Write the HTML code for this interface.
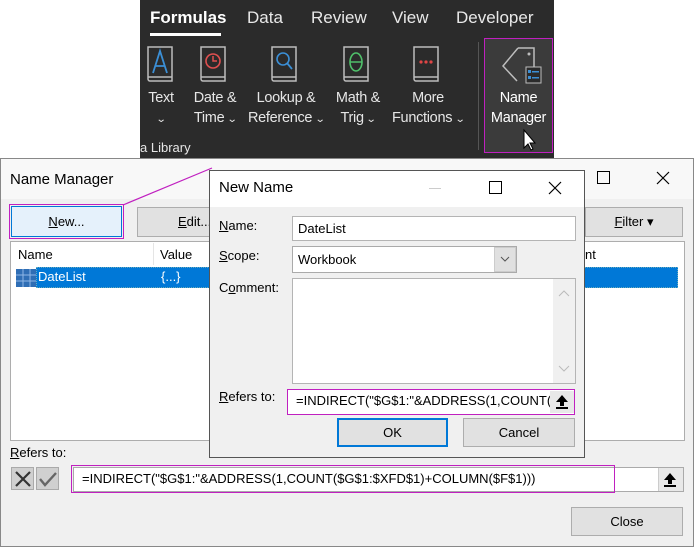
<!DOCTYPE html>
<html><head><meta charset="utf-8"><style>
*{box-sizing:border-box;margin:0;padding:0}
body{width:694px;height:547px;position:relative;background:#fff;font-family:"Segoe UI","Liberation Sans",sans-serif;overflow:hidden;font-size:13px;color:#000}
.a{position:absolute}
.rib{left:140px;top:0;width:414px;height:158px;background:#2b2b2b;color:#e8e8e8}
.rib .t{position:absolute;font-size:17px;top:8px}
.lbl{position:absolute;font-size:14.5px;text-align:center;line-height:20px;color:#e6e6e6;white-space:nowrap;letter-spacing:-0.3px}
.lbl i{font-style:normal;font-size:10px;display:inline-block;transform:scaleX(1.3)}
.btn{position:absolute;background:#e1e1e1;border:1px solid #adadad;text-align:center;font-size:13px}
.inp{position:absolute;background:#fff;border:1px solid #b4b4b4}
u{text-decoration:underline}
</style></head><body>
<div class="a rib">
 <div class="t" style="left:10px;font-weight:bold;color:#fff">Formulas</div>
 <div style="position:absolute;left:10px;top:33px;width:71px;height:3px;background:#fff"></div>
 <div class="t" style="left:107px">Data</div>
 <div class="t" style="left:171px">Review</div>
 <div class="t" style="left:252px">View</div>
 <div class="t" style="left:316px">Developer</div>
 <div style="position:absolute;left:344px;top:38px;width:69px;height:115px;background:#3b3b3b;border:1px solid #c020c0"></div>
 <div style="position:absolute;left:338px;top:42px;width:1px;height:108px;background:#555"></div>
 <svg class="a" style="left:0;top:0" width="414" height="158">
  <g fill="none" stroke="#bdbdbd" stroke-width="1.5">
   <path d="M8 47h24v34h-22a2 2 0 0 1-2-2zM8 77h24"/>
   <path d="M61 47h24v34h-22a2 2 0 0 1-2-2zM61 77h24"/>
   <path d="M132 47h24v34h-22a2 2 0 0 1-2-2zM132 77h24"/>
   <path d="M204 47h24v34h-22a2 2 0 0 1-2-2zM204 77h24"/>
   <path d="M274 47h24v34h-22a2 2 0 0 1-2-2zM274 77h24"/>
   <path d="M378 48l-15 18 14 15M378 48h16v20"/>
  </g>
  <path d="M13 73l7-22 7 22M15.5 66h9" stroke="#3b8fd6" stroke-width="1.8" fill="none"/>
  <circle cx="73" cy="61" r="7" stroke="#e05050" stroke-width="1.6" fill="none"/><path d="M73 56v5h4" stroke="#e05050" stroke-width="1.5" fill="none"/>
  <circle cx="143" cy="59" r="6" stroke="#3b8fd6" stroke-width="1.6" fill="none"/><path d="M147 63l5 6" stroke="#3b8fd6" stroke-width="1.8"/>
  <ellipse cx="216" cy="62" rx="6" ry="9" stroke="#4fc06a" stroke-width="1.6" fill="none"/><path d="M210 62h12" stroke="#4fc06a" stroke-width="1.5"/>
  <circle cx="281" cy="62" r="1.6" fill="#e04545"/><circle cx="286" cy="62" r="1.6" fill="#e04545"/><circle cx="291" cy="62" r="1.6" fill="#e04545"/>
  <circle cx="389" cy="54" r="1.5" fill="#bdbdbd"/>
  <rect x="386" y="67" width="15" height="16" fill="#2b2b2b" stroke="#bdbdbd"/>
  <rect x="388" y="70" width="3" height="3" fill="#3b8fd6"/><rect x="392" y="71" width="7" height="1.5" fill="#3b8fd6"/>
  <rect x="388" y="76" width="3" height="3" fill="#3b8fd6"/><rect x="392" y="77" width="7" height="1.5" fill="#3b8fd6"/>
  <path d="M384 130v18l4-4 3 6 2-1-3-6h5z" fill="#fff" stroke="#000" stroke-width="1"/>
 </svg>
 <div class="lbl" style="left:0;top:88px;width:42px">Text<br><i>⌄</i></div>
 <div class="lbl" style="left:46px;top:88px;width:58px">Date &amp;<br>Time <i>⌄</i></div>
 <div class="lbl" style="left:103px;top:88px;width:86px">Lookup &amp;<br>Reference <i>⌄</i></div>
 <div class="lbl" style="left:189px;top:88px;width:58px">Math &amp;<br>Trig <i>⌄</i></div>
 <div class="lbl" style="left:246px;top:88px;width:84px">More<br>Functions <i>⌄</i></div>
 <div class="lbl" style="left:344px;top:88px;width:69px;color:#fff">Name<br>Manager</div>
 <div class="lbl" style="left:0;top:138px;font-size:13px;letter-spacing:0">a Library</div>
</div>

<!-- Name Manager -->
<div class="a" style="left:0;top:158px;width:694px;height:389px;background:#f0f0f0;border:1px solid #888">
 <div class="a" style="left:0;top:0;width:692px;height:40px;background:#f8f8f8"></div>
</div>
<div class="a" style="left:10px;top:171px;font-size:15px">Name Manager</div>
<div class="a" style="left:597px;top:171px;width:13px;height:13px;border:1.3px solid #000"></div>
<svg class="a" style="left:656px;top:171px" width="14" height="14"><path d="M1 1l12 12M13 1L1 13" stroke="#000" stroke-width="1.2"/></svg>
<div class="a" style="left:9px;top:204px;width:115px;height:35px;border:1px solid #c020c0"></div>
<div class="btn" style="left:11px;top:206px;width:111px;height:31px;background:#e5f1fb;border:1px solid #0078d7;line-height:29px"><u>N</u>ew...</div>
<div class="btn" style="left:137px;top:207px;width:90px;height:30px;line-height:28px;text-align:left;padding-left:40px"><u>E</u>dit...</div>
<div class="btn" style="left:585px;top:207px;width:98px;height:30px;line-height:28px;padding-left:0"><u>F</u>ilter ▾</div>
<div class="a" style="left:10px;top:241px;width:675px;height:200px;background:#fff;border:1px solid #adadad"></div>
<div class="a" style="left:18px;top:247px">Name</div>
<div class="a" style="left:153px;top:243px;width:1px;height:22px;background:#e5e5e5"></div>
<div class="a" style="left:160px;top:247px">Value</div>
<div class="a" style="left:585px;top:247px">nt</div>
<div class="a" style="left:36px;top:267px;width:642px;height:21px;background:#0078d7;border:1px dotted #6ab"></div>
<svg class="a" style="left:16px;top:269px" width="20" height="18"><rect width="20" height="18" fill="#2f6eb5"/><path d="M0 6h20M0 12h20M7 0v18M14 0v18" stroke="#8fb7e6"/></svg>
<div class="a" style="left:38px;top:269px;color:#fff">DateList</div>
<div class="a" style="left:161px;top:269px;color:#fff">{...}</div>
<div class="a" style="left:10px;top:445px"><u>R</u>efers to:</div>
<div class="a" style="left:11px;top:467px;width:23px;height:23px;background:#d0d0d0;border:1px solid #aaa"></div>
<svg class="a" style="left:14px;top:470px" width="18" height="18"><path d="M2 2l14 14M16 2L2 16" stroke="#333" stroke-width="2.2"/></svg>
<div class="a" style="left:36px;top:467px;width:23px;height:23px;background:#d0d0d0;border:1px solid #aaa"></div>
<svg class="a" style="left:38px;top:470px" width="20" height="18"><path d="M2 9l5 6L18 3" stroke="#666" stroke-width="2.4" fill="none"/></svg>
<div class="inp" style="left:73px;top:467px;width:611px;height:25px;border-color:#aaa"></div>
<div class="a" style="left:71px;top:465px;width:544px;height:28px;border:1px solid #c020c0"></div>
<div class="a" style="left:82px;top:471px">=INDIRECT("$G$1:"&amp;ADDRESS(1,COUNT($G$1:$XFD$1)+COLUMN($F$1)))</div>
<div class="a" style="left:658px;top:468px;width:25px;height:23px;background:#e8e8e8;border-left:1px solid #ccc"></div>
<svg class="a" style="left:663px;top:472px" width="14" height="15"><path d="M7 1L1 8h4v4h4V8h4z" fill="#000"/><rect x="1" y="13" width="12" height="2" fill="#000"/></svg>
<div class="btn" style="left:571px;top:507px;width:112px;height:29px;line-height:27px">Close</div>

<!-- New Name -->
<svg class="a" style="left:0;top:0" width="694" height="547"><path d="M123 205L212 168" stroke="#c020c0" stroke-width="1.2"/></svg>
<div class="a" style="left:209px;top:170px;width:376px;height:288px;background:#f0f0f0;border:1px solid #555">
 <div class="a" style="left:0;top:0;width:374px;height:36px;background:#fff"></div>
</div>
<div class="a" style="left:219px;top:179px;font-size:15px">New Name</div>
<div class="a" style="left:429px;top:188px;width:12px;height:1px;background:#ccc"></div>
<div class="a" style="left:489px;top:181px;width:13px;height:13px;border:1.3px solid #000"></div>
<svg class="a" style="left:548px;top:181px" width="14" height="14"><path d="M1 1l12 12M13 1L1 13" stroke="#000" stroke-width="1.2"/></svg>
<div class="a" style="left:219px;top:218px"><u>N</u>ame:</div>
<div class="inp" style="left:292px;top:216px;width:284px;height:25px;padding:4px 5px">DateList</div>
<div class="a" style="left:219px;top:248px"><u>S</u>cope:</div>
<div class="inp" style="left:292px;top:246px;width:225px;height:27px;padding:5px 5px;border-color:#aaa">Workbook</div>
<div class="a" style="left:494px;top:247px;width:22px;height:25px;background:#e0e0e0;border:1px solid #ccc"></div>
<svg class="a" style="left:500px;top:256px" width="10" height="6"><path d="M1 1l4 4 4-4" stroke="#555" fill="none"/></svg>
<div class="a" style="left:219px;top:280px">C<u>o</u>mment:</div>
<div class="inp" style="left:292px;top:278px;width:284px;height:106px"></div>
<div class="a" style="left:553px;top:279px;width:22px;height:104px;background:#f0f0f0"></div>
<svg class="a" style="left:558px;top:289px" width="12" height="8"><path d="M1 7l5-5 5 5" stroke="#bbb" fill="none"/></svg>
<svg class="a" style="left:558px;top:365px" width="12" height="8"><path d="M1 1l5 5 5-5" stroke="#bbb" fill="none"/></svg>
<div class="a" style="left:219px;top:389px"><u>R</u>efers to:</div>
<div class="inp" style="left:288px;top:390px;width:287px;height:24px;overflow:hidden;white-space:nowrap;padding:3px 8px;border:none">=INDIRECT("$G$1:"&amp;ADDRESS(1,COUNT($G</div>
<div class="a" style="left:550px;top:391px;width:24px;height:22px;background:#e8e8e8"></div>
<svg class="a" style="left:555px;top:394px" width="14" height="15"><path d="M7 1L1 8h4v4h4V8h4z" fill="#000"/><rect x="1" y="13" width="12" height="2" fill="#000"/></svg>
<div class="a" style="left:287px;top:389px;width:288px;height:26px;border:1px solid #c020c0"></div>
<div class="btn" style="left:337px;top:418px;width:111px;height:29px;border:2px solid #0078d7;line-height:25px">OK</div>
<div class="btn" style="left:463px;top:418px;width:112px;height:29px;line-height:27px">Cancel</div>
</body></html>
